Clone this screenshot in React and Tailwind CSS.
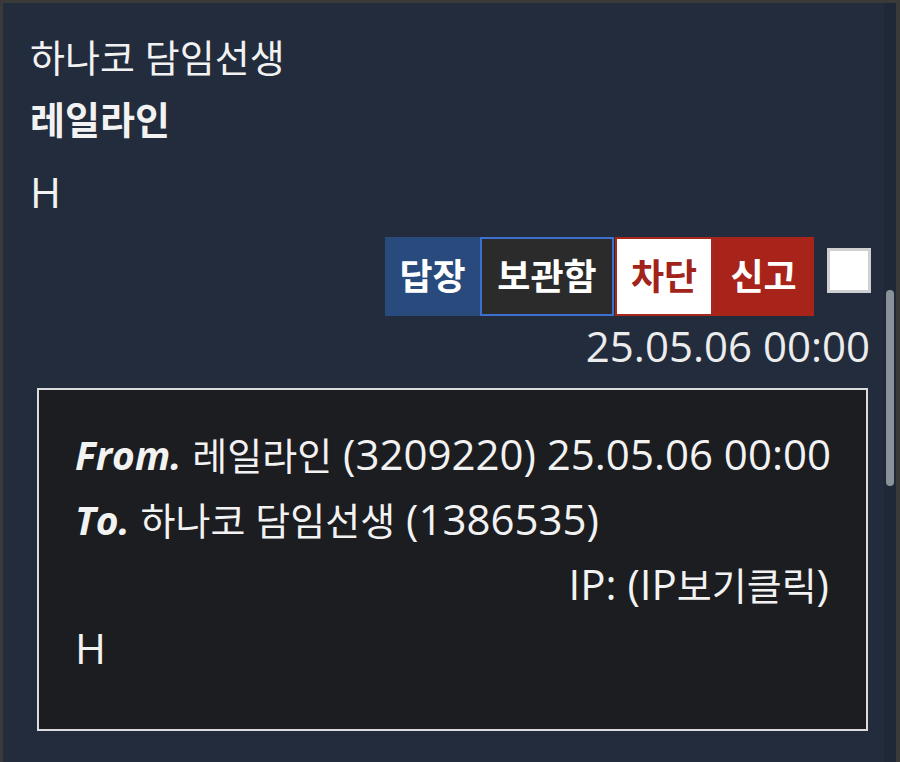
function K({ children, className = "" }) {
  return <span className={"text-[38px] tracking-normal " + className}>{children}</span>;
}

export default function App() {
  const font = { fontFamily: '"Open Sans", "Noto Sans CJK KR", sans-serif' };
  return (
    <div className="w-[900px] h-[762px] bg-[#3a3b39] pt-[3px] pl-[3px] pr-[4px] overflow-hidden" style={font}>
      <div className="relative h-[759px] bg-[#222c3c] text-[#f2f2f2] pl-[27px] pr-[28px] pt-[26px]">
        <div className="absolute right-0 top-0 bottom-0 w-[12px] bg-[#1f2837]" />
        <div className="absolute right-[2px] top-[287px] w-[8px] h-[196px] rounded-full bg-[#8b919b]" />

        <div className="text-[38px] leading-[56px]">하나코 담임선생</div>
        <div className="text-[38px] leading-[56px] font-bold mt-[6px]">레일라인</div>
        <div className="text-[42px] leading-[56px] mt-[17px]">H</div>

        <div className="flex justify-end items-start mt-[17px]">
          <div className="flex items-stretch h-[79px]">
            <div className="flex items-center justify-center w-[95px] bg-[#284a7d] text-white font-bold text-[36px]">답장</div>
            <div className="flex items-center justify-center w-[134px] bg-[#2b2b2b] border-2 border-[#3d70cf] text-white font-bold text-[36px]">보관함</div>
            <div className="flex items-center justify-center w-[98px] bg-white border-2 border-[#a8281e] text-[#a1231a] font-bold text-[36px] ml-[1px]">차단</div>
            <div className="flex items-center justify-center w-[101px] bg-[#a8241b] text-white font-bold text-[36px]">신고</div>
          </div>
          <div className="w-[44px] h-[45px] bg-white border-[3px] border-[#cfd0d2] ml-[13px] mr-[-3px] mt-[11px]" />
        </div>

        <div className="text-right text-[42px] leading-[56px] text-[#ececec] mt-[2px] mr-[-2px]">25.05.06 00:00</div>

        <div className="mt-[14px] ml-[7px] border-2 border-[#dcdcdc] bg-[#1c1d21] h-[343px] pl-[36px] pr-[37px] pt-[32px] text-[42px] leading-[63px]">
          <div className="whitespace-nowrap"><span className="italic font-bold text-[39px]">From.</span> <K>레일라인</K> (3209220) 25.05.06 00:00</div>
          <div className="whitespace-nowrap"><span className="italic font-bold text-[39px]">To.</span> <K>하나코 담임선생</K> (1386535)</div>
          <div className="text-right whitespace-nowrap">IP: (IP<K>보기클릭</K>)</div>
          <div className="mt-[-1px]">H</div>
        </div>
      </div>
    </div>
  );
}
